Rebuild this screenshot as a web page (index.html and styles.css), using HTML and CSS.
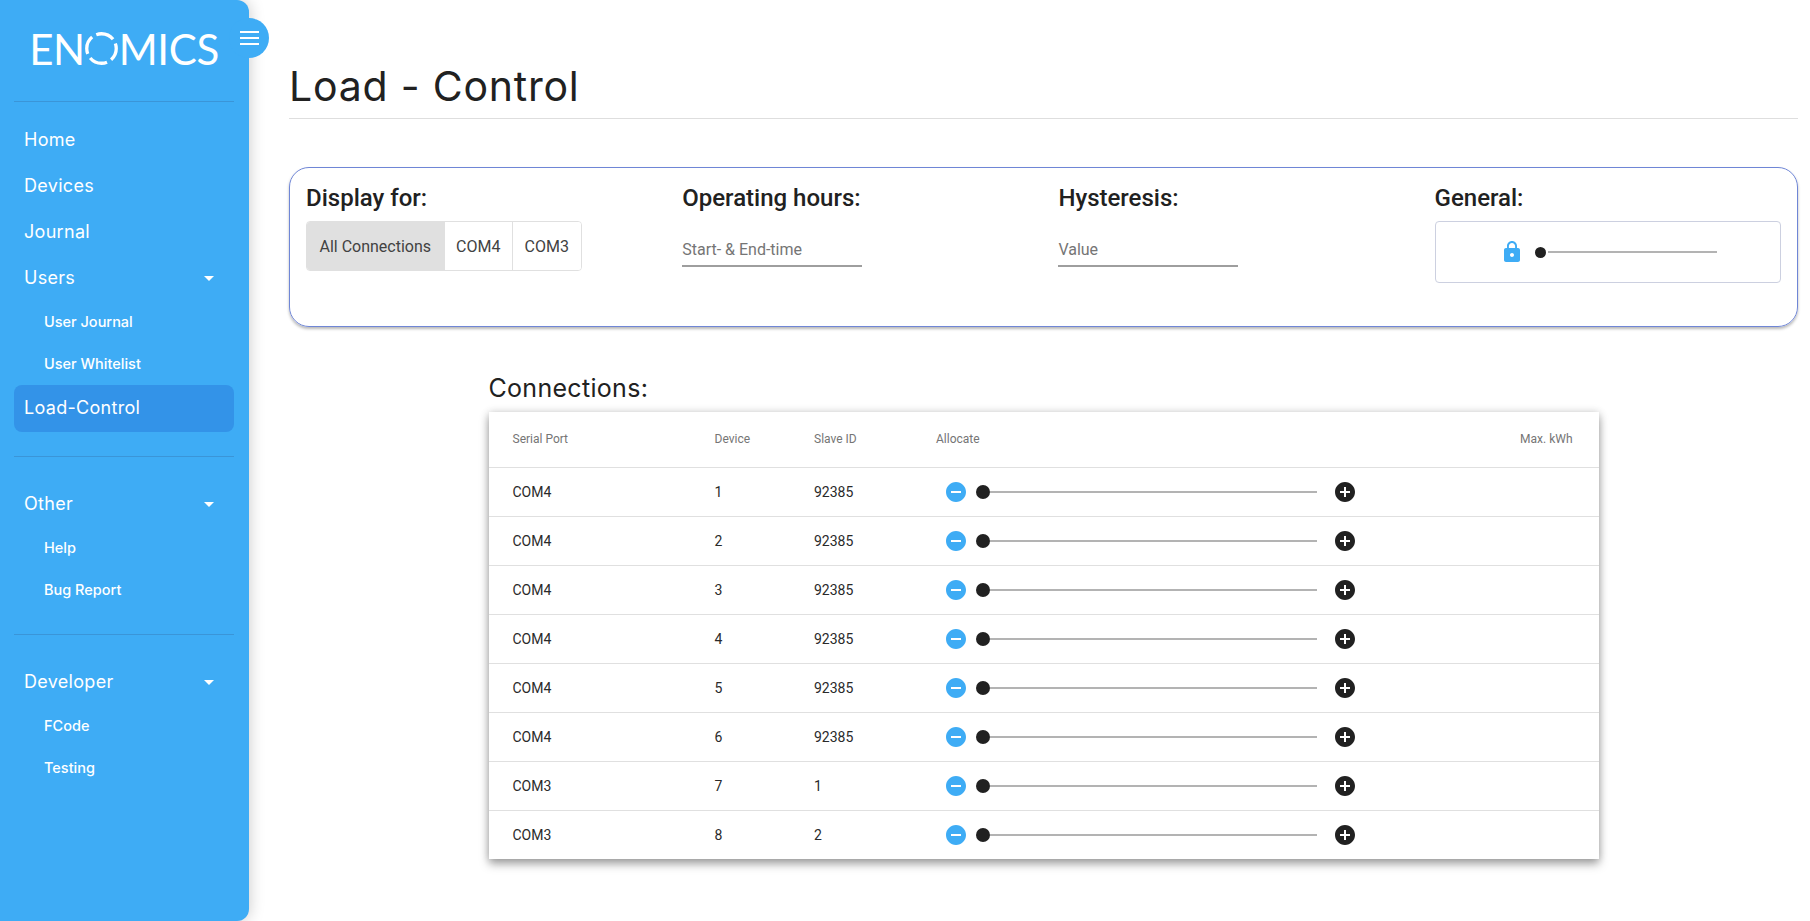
FILE: index.html
```html
<!DOCTYPE html>
<html lang="en">
<head>
<meta charset="utf-8">
<title>Load - Control</title>
<link rel="stylesheet" href="styles.css">
</head>
<body>
<svg class="defs" width="0" height="0" aria-hidden="true">
  <symbol id="i-minus" viewBox="0 0 24 24"><path d="M12 2C6.48 2 2 6.48 2 12s4.48 10 10 10 10-4.48 10-10S17.52 2 12 2zm5 11H7v-2h10v2z"/></symbol>
  <symbol id="i-plus" viewBox="0 0 24 24"><path d="M12 2C6.48 2 2 6.48 2 12s4.48 10 10 10 10-4.48 10-10S17.52 2 12 2zm5 11h-4v4h-2v-4H7v-2h4V7h2v4h4v2z"/></symbol>
</svg>
<aside class="sidebar">
  <button class="toggle" aria-label="Toggle menu"><span></span><span></span><span></span></button>
  <div class="logo">EN<svg class="logo-o" viewBox="0 0 34 34" aria-hidden="true"><circle cx="17" cy="17" r="15.2" /></svg>MICS</div>
  <div class="rule"></div>
  <nav class="group first">
    <a class="item">Home</a>
    <a class="item">Devices</a>
    <a class="item">Journal</a>
    <a class="item caret">Users</a>
    <a class="sub">User Journal</a>
    <a class="sub">User Whitelist</a>
    <a class="item active">Load-Control</a>
  </nav>
  <div class="rule"></div>
  <nav class="group second">
    <a class="item caret">Other</a>
    <a class="sub">Help</a>
    <a class="sub">Bug Report</a>
  </nav>
  <div class="rule"></div>
  <nav class="group">
    <a class="item caret">Developer</a>
    <a class="sub">FCode</a>
    <a class="sub">Testing</a>
  </nav>
</aside>
<main class="main">
  <h1 class="title">Load - Control</h1>
  <section class="panel">
    <div class="col">
      <h2>Display for:</h2>
      <div class="btns"><button class="on">All Connections</button><button>COM4</button><button>COM3</button></div>
    </div>
    <div class="col">
      <h2>Operating hours:</h2>
      <div class="field">Start- &amp; End-time</div>
    </div>
    <div class="col">
      <h2>Hysteresis:</h2>
      <div class="field">Value</div>
    </div>
    <div class="col">
      <h2>General:</h2>
      <div class="general">
        <svg class="lock" viewBox="0 0 24 24" aria-hidden="true"><path d="M18 8h-1V6c0-2.76-2.24-5-5-5S7 3.24 7 6v2H6c-1.1 0-2 .9-2 2v10c0 1.1.9 2 2 2h12c1.1 0 2-.9 2-2V10c0-1.1-.9-2-2-2zm-6 9c-1.1 0-2-.9-2-2s.9-2 2-2 2 .9 2 2-.9 2-2 2zm3.1-9H8.9V6c0-1.71 1.39-3.1 3.1-3.1 1.71 0 3.1 1.39 3.1 3.1v2z"/></svg>
        <div class="gslider"><i class="thumb"></i><i class="track"></i></div>
      </div>
    </div>
  </section>
  <section class="conn">
    <h3>Connections:</h3>
    <table class="tbl">
      <thead><tr><th class="c1">Serial Port</th><th class="c2">Device</th><th class="c3">Slave ID</th><th class="c4">Allocate</th><th class="c5">Max. kWh</th></tr></thead>
      <tbody>
        <tr><td>COM4</td><td>1</td><td>92385</td><td><div class="alloc"><svg class="ic minus"><use href="#i-minus"/></svg><div class="slider"><i class="thumb"></i><i class="track"></i></div><svg class="ic plus"><use href="#i-plus"/></svg></div></td><td></td></tr>
        <tr><td>COM4</td><td>2</td><td>92385</td><td><div class="alloc"><svg class="ic minus"><use href="#i-minus"/></svg><div class="slider"><i class="thumb"></i><i class="track"></i></div><svg class="ic plus"><use href="#i-plus"/></svg></div></td><td></td></tr>
        <tr><td>COM4</td><td>3</td><td>92385</td><td><div class="alloc"><svg class="ic minus"><use href="#i-minus"/></svg><div class="slider"><i class="thumb"></i><i class="track"></i></div><svg class="ic plus"><use href="#i-plus"/></svg></div></td><td></td></tr>
        <tr><td>COM4</td><td>4</td><td>92385</td><td><div class="alloc"><svg class="ic minus"><use href="#i-minus"/></svg><div class="slider"><i class="thumb"></i><i class="track"></i></div><svg class="ic plus"><use href="#i-plus"/></svg></div></td><td></td></tr>
        <tr><td>COM4</td><td>5</td><td>92385</td><td><div class="alloc"><svg class="ic minus"><use href="#i-minus"/></svg><div class="slider"><i class="thumb"></i><i class="track"></i></div><svg class="ic plus"><use href="#i-plus"/></svg></div></td><td></td></tr>
        <tr><td>COM4</td><td>6</td><td>92385</td><td><div class="alloc"><svg class="ic minus"><use href="#i-minus"/></svg><div class="slider"><i class="thumb"></i><i class="track"></i></div><svg class="ic plus"><use href="#i-plus"/></svg></div></td><td></td></tr>
        <tr><td>COM3</td><td>7</td><td>1</td><td><div class="alloc"><svg class="ic minus"><use href="#i-minus"/></svg><div class="slider"><i class="thumb"></i><i class="track"></i></div><svg class="ic plus"><use href="#i-plus"/></svg></div></td><td></td></tr>
        <tr><td>COM3</td><td>8</td><td>2</td><td><div class="alloc"><svg class="ic minus"><use href="#i-minus"/></svg><div class="slider"><i class="thumb"></i><i class="track"></i></div><svg class="ic plus"><use href="#i-plus"/></svg></div></td><td></td></tr>
      </tbody>
    </table>
  </section>
</main>
</body>
</html>
```
FILE: styles.css
```css
* { box-sizing: border-box; }
html, body { margin: 0; height: 100%; }
body {
  display: flex;
  width: 1810px;
  height: 921px;
  overflow: hidden;
  background: #fff;
  color: #212121;
  font-family: Roboto, sans-serif;
}
.defs { display: block; width: 0; height: 0; }

.sidebar {
  position: relative;
  flex: 0 0 249px;
  height: 921px;
  padding: 0 15px 0 14px;
  background: #3eacf5;
  border-radius: 0 12px 12px 0;
  box-shadow: 0 0 16px rgba(0, 0, 0, .22);
  font-family: Inter, sans-serif;
  color: #fff;
}
.toggle {
  position: absolute;
  top: 18px;
  left: 229px;
  width: 40px;
  height: 40px;
  padding: 0;
  border: 0;
  border-radius: 50%;
  background: #3eacf5;
  display: flex;
  flex-direction: column;
  align-items: center;
  justify-content: center;
  gap: 4px;
}
.toggle span { display: block; width: 19px; height: 2px; background: #fff; }
.logo {
  height: 101px;
  display: flex;
  align-items: flex-start;
  justify-content: center;
  padding-top: 24px;
  font-family: Lato, sans-serif;
  font-weight: 400;
  font-size: 42px;
  line-height: 50px;
  letter-spacing: -.4px;
  color: #fff;
}
.logo-o { width: 33px; height: 33px; margin: 8px 1px 0 0; fill: none; stroke: #fff; stroke-width: 3.4; stroke-dasharray: 19 4.9; stroke-dashoffset: 6; }
.rule { height: 1px; background: #3a95d8; }
.group { display: flex; flex-direction: column; padding: 24px 0; }
.group.first { padding-top: 15px; }
.group.second { padding-bottom: 23px; }
.group a { display: block; position: relative; color: #fff; }
.item { height: 46px; line-height: 46px; padding-left: 10px; font-size: 18px; letter-spacing: .3px; }
.sub { height: 42px; line-height: 42px; padding-left: 30px; font-size: 14.5px; font-weight: 500; }
.item.active { height: 47px; line-height: 46px; background: #3393e8; border-radius: 8px; }
.caret::after {
  content: "";
  position: absolute;
  top: 21px;
  right: 20px;
  border: 5px solid transparent;
  border-top-color: #fff;
  border-bottom: 0;
}

.main { flex: 1; min-width: 0; padding: 0 12px 0 40px; }
.title {
  margin: 0;
  height: 119px;
  padding-top: 60px;
  border-bottom: 1px solid #dedede;
  font-family: Inter, sans-serif;
  font-weight: 400;
  font-size: 41px;
  line-height: 52px;
  letter-spacing: .78px;
  color: #212121;
}
.panel {
  display: grid;
  grid-template-columns: repeat(4, 376.2px);
  width: 1509px;
  height: 160px;
  margin-top: 48px;
  padding: 14px 0 0 16px;
  border: 1px solid #6f86d6;
  border-radius: 20px;
  box-shadow: 0 2px 3px rgba(0, 0, 0, .28);
}
.col h2 { margin: 0 0 7px; font-size: 24px; font-weight: 500; line-height: 32px; color: #212121; }
.btns { display: flex; width: 276px; height: 50px; border: 1px solid #e0e0e0; border-radius: 4px; overflow: hidden; }
.btns button {
  flex: 0 0 68.5px;
  padding: 0;
  border: 0;
  border-left: 1px solid #e0e0e0;
  background: #fff;
  font: 400 16px Roboto, sans-serif;
  color: #424242;
}
.btns button.on { flex: 0 0 136.5px; border-left: 0; background: #e0e0e0; }
.field { width: 180px; height: 46px; padding-top: 19px; border-bottom: 2px solid #9e9e9e; font-size: 16px; line-height: 20px; color: #757575; }
.general { display: flex; align-items: center; width: 346px; height: 62px; padding-left: 64px; border: 1px solid #ccd0e0; border-radius: 4px; }
.lock { width: 24px; height: 24px; fill: #3eacf5; }
.gslider { display: flex; align-items: center; gap: 2px; width: 182px; margin-left: 11px; }
.gslider .thumb { flex: 0 0 11px; height: 11px; }

.thumb { display: block; flex: 0 0 14px; height: 14px; border-radius: 50%; background: #212121; }
.track { display: block; flex: 1; height: 2px; background: #b3b3b3; }

.conn { width: 1110px; margin: 43px auto 0; }
.conn h3 { margin: 0 0 6px; font-family: Inter, sans-serif; font-weight: 400; font-size: 25px; line-height: 36px; letter-spacing: .3px; color: #212121; }
.tbl {
  width: 1110px;
  table-layout: fixed;
  border-collapse: collapse;
  background: #fff;
  box-shadow: 0 5px 9px rgba(0, 0, 0, .35), 0 0 8px rgba(0, 0, 0, .15);
}
.tbl th {
  height: 55px;
  padding: 0 0 0 24px;
  border-bottom: 1px solid #e0e0e0;
  font-size: 12px;
  font-weight: 400;
  text-align: left;
  color: #757575;
}
.tbl td { height: 49px; padding: 0 0 0 24px; border-bottom: 1px solid #e0e0e0; font-size: 14px; color: #2a2a2a; }
.tbl tr:last-child td { border-bottom: 0; }
.c1 { width: 202px; }
.c2 { width: 99.5px; }
.c3 { width: 122px; }
.c4 { width: 450px; }
.tbl th.c5 { padding: 0 26px 0 0; text-align: right; }
.alloc { display: flex; align-items: center; padding-left: 8px; }
.ic { width: 24px; height: 24px; flex: none; }
.minus { fill: #3eacf5; }
.plus { fill: #212121; }
.slider { display: flex; align-items: center; width: 341px; margin: 0 16px 0 8px; }
```
